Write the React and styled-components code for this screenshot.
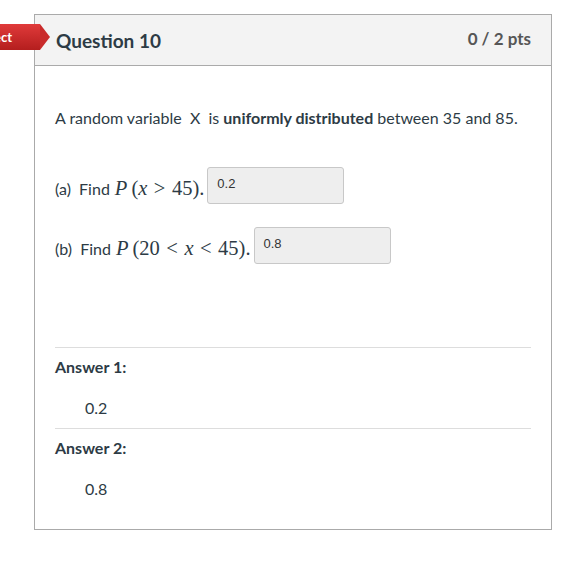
import React from "react";
import styled, { createGlobalStyle } from "styled-components";

const Global = createGlobalStyle`
  html, body { margin: 0; padding: 0; background: #fff; }
  body { font-family: Lato, "Helvetica Neue", Arial, sans-serif; color: #2d3b45; }
`;

const Page = styled.div`
  position: relative;
  width: 582px;
  height: 561px;
  padding: 14px 31px 0 34px;
  box-sizing: border-box;
`;

const Card = styled.div`
  border: 1px solid #aaaaaa;
  width: 518px;
  height: 516px;
  box-sizing: border-box;
  display: flex;
  flex-direction: column;
`;

const Header = styled.div`
  height: 51px;
  box-sizing: border-box;
  background: #f3f3f3;
  border-bottom: 1px solid #aaaaaa;
  display: flex;
  justify-content: space-between;
  align-items: center;
  padding: 0 20px 0 21px;
`;

const Title = styled.h2`
  margin: 0;
  font-size: 19px;
  font-weight: 700;
  color: #2d3b45;
`;

const Points = styled.div`
  font-size: 17px;
  font-weight: 700;
  color: #565656;
  margin-bottom: 4px;
`;

const Badge = styled.div`
  position: absolute;
  left: -40px;
  top: 24px;
  height: 26px;
  width: 80px;
  background: linear-gradient(#e03a3a, #b41e1e);
  color: #fff;
  font-size: 13px;
  font-weight: 700;
  display: flex;
  align-items: center;
  justify-content: flex-end;
  padding-right: 28px;
  box-sizing: border-box;
  &::after {
    content: "";
    position: absolute;
    right: -10px;
    top: 0;
    border-top: 13px solid transparent;
    border-bottom: 13px solid transparent;
    border-left: 10px solid #c92b2b;
  }
`;

const Body = styled.div`
  padding: 41px 20px 0 20px;
  font-size: 16px;
  color: #2d3b45;
`;

const Prompt = styled.p`
  margin: 0 0 41px 0;
  line-height: 22px;
`;

const Part = styled.div`
  display: flex;
  align-items: center;
  height: 37px;
  margin-bottom: 23px;
  color: #2d3b45;
`;

const Label = styled.span`
  margin-right: 5px;
`;

const Math = styled.span`
  font-family: "Liberation Serif", "DejaVu Serif", serif;
  font-size: 20.5px;
  color: #2d3b45;
  margin-right: 3px;
  white-space: nowrap;
  i { font-style: italic; }
`;

const Var = styled.i`
  margin-right: ${(p) => (p.$gap ? "4px" : "0")};
`;

const Rel = styled.span`
  margin: 0 6.5px;
`;

const Input = styled.div`
  width: 137px;
  height: 37px;
  box-sizing: border-box;
  background: #eeeeee;
  border: 1px solid #c8c8c8;
  border-radius: 3px;
  font-family: "Liberation Sans", Arial, sans-serif;
  font-size: 13px;
  color: #333;
  padding: 8px 0 0 9px;
  margin-top: -7px;
`;

const Answers = styled.div`
  margin-top: 80px;
`;

const AnswerBlock = styled.div`
  border-top: 1px solid #dddddd;
  padding: 9px 0 0 0;
  height: 81px;
  box-sizing: border-box;
`;

const AnswerLabel = styled.div`
  font-weight: 700;
  font-size: 16px;
  line-height: 20px;
  color: #2d3b45;
`;

const AnswerValue = styled.div`
  margin: 21px 0 0 30px;
  font-size: 16px;
  line-height: 20px;
  color: #2d3b45;
`;

export default function App() {
  return (
    <>
      <Global />
      <Page>
        <Card>
          <Header>
            <Title>Question 10</Title>
            <Points>0 / 2 pts</Points>
          </Header>
          <Body>
            <Prompt>
              A random variable&nbsp; X &nbsp;is <b>uniformly distributed</b> between 35 and 85.
            </Prompt>
            <Part>
              <Label>(a)&nbsp; Find</Label>
              <Math>
                <Var $gap>P</Var>(<Var>x</Var><Rel>&gt;</Rel>45).
              </Math>
              <Input>0.2</Input>
            </Part>
            <Part>
              <Label>(b)&nbsp; Find</Label>
              <Math>
                <Var $gap>P</Var>(20<Rel>&lt;</Rel><Var>x</Var><Rel>&lt;</Rel>45).
              </Math>
              <Input>0.8</Input>
            </Part>
            <Answers>
              <AnswerBlock>
                <AnswerLabel>Answer 1:</AnswerLabel>
                <AnswerValue>0.2</AnswerValue>
              </AnswerBlock>
              <AnswerBlock>
                <AnswerLabel>Answer 2:</AnswerLabel>
                <AnswerValue>0.8</AnswerValue>
              </AnswerBlock>
            </Answers>
          </Body>
        </Card>
        <Badge>Incorrect</Badge>
      </Page>
    </>
  );
}
